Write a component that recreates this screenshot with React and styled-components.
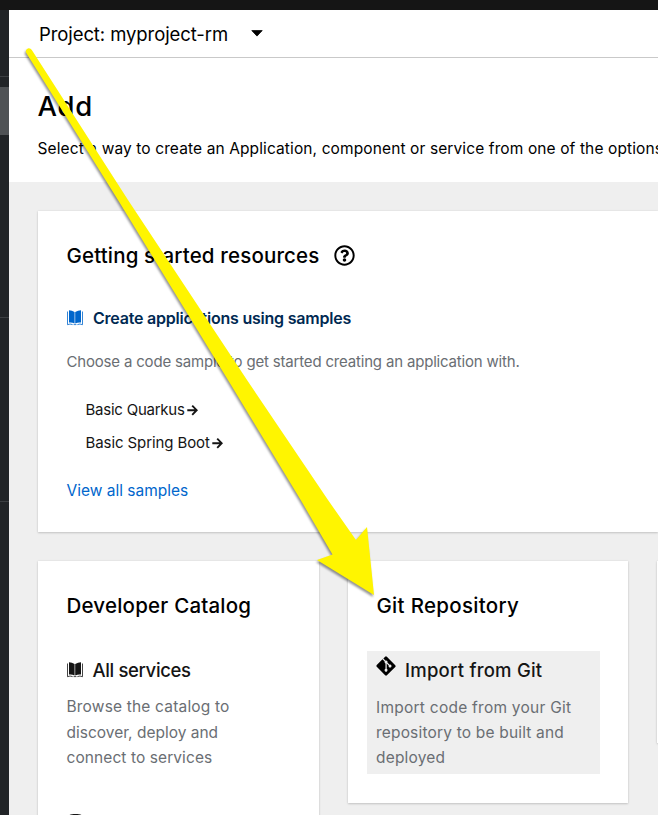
import React from "react";
import styled, { createGlobalStyle } from "styled-components";
import { FaGitAlt, FaRegQuestionCircle, FaDatabase } from "react-icons/fa";

const GlobalStyle = createGlobalStyle`
  * { box-sizing: border-box; }
  html, body { margin: 0; overflow: hidden; }
  h1, h2, h3, p { margin: 0; }
  body { background: #efefef; font-family: Inter, "Liberation Sans", sans-serif; color: #151515; }
`;

const Page = styled.div`
  position: relative;
  display: grid;
  grid-template: 10px 805px / 9px 649px;
  width: 658px;
  height: 815px;
  overflow: hidden;
`;
const Masthead = styled.div`
  grid-column: 1 / -1;
  background: #151515;
`;
const Sidebar = styled.aside`
  display: flex;
  flex-direction: column;
  background: #212427;
`;
const SideBlock = styled.div`
  height: ${(p) => p.$h}px;
  background: ${(p) => (p.$active ? "#4f5255" : "transparent")};
  border-bottom: ${(p) => (p.$line ? "1px solid #3c3f42" : "none")};
`;
const Main = styled.main`
  min-width: 0;
  overflow: hidden;
`;
const ProjectBar = styled.div`
  display: flex;
  align-items: center;
  gap: 22.5px;
  height: 48px;
  padding: 0 0 0 30px;
  background: #fff;
  border-bottom: 1px solid #c9c9c9;
  color: #000;
`;
const Text = styled.div`
  font-size: ${(p) => p.$size}px;
  font-weight: ${(p) => p.$weight || 400};
  line-height: ${(p) => p.$lh || 24}px;
  letter-spacing: ${(p) => p.$ls || 0}px;
  color: ${(p) => p.$color || "#000"};
  white-space: nowrap;
`;
const PageHeader = styled.header`
  display: flex;
  flex-direction: column;
  gap: 13px;
  height: 124px;
  padding: 30px 0 0 28.5px;
  background: #fff;
`;
const Content = styled.div`
  display: flex;
  flex-direction: column;
  gap: 29px;
  padding: 29px 0 0 29px;
`;
const Card = styled.section`
  height: ${(p) => p.$h}px;
  padding: 30px 28px 0 28.5px;
  background: #fff;
  box-shadow: 0 1px 2px rgba(3, 3, 3, 0.16), 0 0 2px rgba(3, 3, 3, 0.08);
`;
const Cards = styled.div`
  display: grid;
  grid-template-columns: 281px 280px 280px;
  gap: 29px;
  align-items: start;
`;
const HeadingRow = styled.div`
  display: flex;
  align-items: center;
  gap: 14.5px;
  height: 29px;
  padding-bottom: 1px;
`;
const SampleTitle = styled.div`
  display: flex;
  align-items: center;
  gap: 10.5px;
  margin: 36px 0 20px;
`;
const Samples = styled.ul`
  list-style: none;
  margin: 19px 0 20px;
  padding: 0 0 0 19px;
`;
const Sample = styled.li`
  display: flex;
  align-items: center;
  gap: 2px;
  height: 33px;
`;
const Item = styled.article`
  height: ${(p) => p.$h}px;
  margin: ${(p) => p.$margin};
  padding: ${(p) => p.$padding || "0"};
  background: ${(p) => p.$bg || "transparent"};
`;
const ItemTitle = styled.div`
  display: flex;
  align-items: center;
  gap: ${(p) => p.$gap}px;
  height: 26px;
  margin-bottom: ${(p) => p.$mb || 11}px;
`;
const GitMark = styled(FaGitAlt)`
  width: 22px;
  height: 22px;
  margin: 0 0 9px -0.8px;
  flex: none;
  color: #000;
`;
const Pointer = styled.svg`
  position: absolute;
  inset: 0;
  pointer-events: none;
  filter: drop-shadow(-1px 2px 1px rgba(0, 0, 0, 0.42));
`;

function Book({ color }) {
  return (
    <svg width="16" height="16" viewBox="0 0 16 16">
      <path d="M2 .3Q5 .5 7.6 2V13.6Q5 12.2 2 12.6ZM14 .3Q11 .5 8.2 2V13.6Q11 12.2 14 12.6Z" fill={color} />
      <path d="M.5 1.5V14.7Q3 13.4 5.6 14.6M15.5 1.5V14.7Q13 13.4 10.4 14.6M6.6 14.6H9.4" fill="none" stroke={color} strokeWidth=".8" />
    </svg>
  );
}

function Caret() {
  return (
    <svg width="12" height="7" viewBox="0 0 12 7">
      <path d="M.8 .6H11.2L6 6.1Z" fill="#000" stroke="#000" strokeWidth=".8" strokeLinejoin="round" />
    </svg>
  );
}

function Arrow() {
  return (
    <svg width="11" height="12" viewBox="0 0 11 12">
      <path d="M.3 6.2H9.4M5.2 1.6L9.7 6.2L5.2 10.8" fill="none" stroke="#151515" strokeWidth="1.9" />
    </svg>
  );
}

function Description({ lines }) {
  return lines.map(([text, ls]) => (
    <Text key={text} $size={15.5} $lh={25.4} $ls={ls} $color="#6a6e73">{text}</Text>
  ));
}

export default function App() {
  return (
    <Page>
      <GlobalStyle />
      <Masthead />
      <Sidebar>
        <SideBlock $h={67} $line />
        <SideBlock $h={10} />
        <SideBlock $h={48} $active />
        <SideBlock $h={183} $line />
        <SideBlock $h={184} $line />
      </Sidebar>
      <Main>
        <ProjectBar>
          <Text $size={18.5} $ls={-0.09}>Project: myproject-rm</Text>
          <Caret />
        </ProjectBar>
        <PageHeader>
          <Text as="h1" $size={27.5} $weight={500} $lh={36} $ls={0.7}>Add</Text>
          <Text $size={15.5} $ls={0.112}>
            Select a way to create an Application, component or service from one of the options
          </Text>
        </PageHeader>
        <Content>
          <Card $h={321}>
            <HeadingRow>
              <Text as="h2" $size={20.5} $weight={500} $lh={29} $ls={0.15}>Getting started resources</Text>
              <FaRegQuestionCircle size={21} color="#000" />
            </HeadingRow>
            <SampleTitle>
              <Book color="#0066cc" />
              <Text as="h3" $size={16} $weight={600} $ls={-0.225} $color="#002952">Create applications using samples</Text>
            </SampleTitle>
            <Text $size={15} $ls={-0.181} $color="#6a6e73">
              Choose a code sample to get started creating an application with.
            </Text>
            <Samples>
              <Sample>
                <Text $size={15} $ls={-0.235} $color="#151515">Basic Quarkus</Text>
                <Arrow />
              </Sample>
              <Sample>
                <Text $size={15} $ls={-0.093} $color="#151515">Basic Spring Boot</Text>
                <Arrow />
              </Sample>
            </Samples>
            <Text $size={15.5} $color="#0066cc">View all samples</Text>
          </Card>
          <Cards>
            <Card $h={300}>
              <Text as="h2" $size={20.5} $weight={500} $lh={29} $ls={0.21}>Developer Catalog</Text>
              <Item $h={152} $margin="37px 0 0">
                <ItemTitle $gap={10} $mb={11.3}>
                  <Book color="#151515" />
                  <Text as="h3" $size={18.5} $weight={500} $ls={-0.36} $color="#151515">All services</Text>
                </ItemTitle>
                <Description
                  lines={[["Browse the catalog to", 0.18], ["discover, deploy and", 0], ["connect to services", 0.083]]}
                />
              </Item>
              <Item $h={60} $margin="0">
                <ItemTitle $gap={10}>
                  <FaDatabase size={17} color="#151515" />
                  <Text as="h3" $size={18.5} $weight={500} $color="#151515">Database</Text>
                </ItemTitle>
              </Item>
            </Card>
            <Card $h={242}>
              <Text as="h2" $size={20.5} $weight={500} $lh={29} $ls={0.3}>Git Repository</Text>
              <Item $h={123} $margin="31px 0 0 -9.5px" $padding="6px 0 0 9px" $bg="#efefef">
                <ItemTitle $gap={7.8} $mb={11.6}>
                  <GitMark />
                  <Text as="h3" $size={18.5} $weight={500} $ls={0.23} $color="#151515">Import from Git</Text>
                </ItemTitle>
                <Description
                  lines={[["Import code from your Git", 0.25], ["repository to be built and", 0.18], ["deployed", 0.2]]}
                />
              </Item>
            </Card>
            <Card $h={182} />
          </Cards>
        </Content>
      </Main>
      <Pointer width="658" height="815" viewBox="0 0 658 815">
        <path
          d="M26 52.5Q25.2 49.8 27.8 48.5Q30.3 47.8 31.8 50L128 200L247 380L328 500L356 540L367 527L374 595L317 560L332.5 554.5L300.7 500L228 380L118 200Z"
          fill="#fff500"
        />
      </Pointer>
    </Page>
  );
}
